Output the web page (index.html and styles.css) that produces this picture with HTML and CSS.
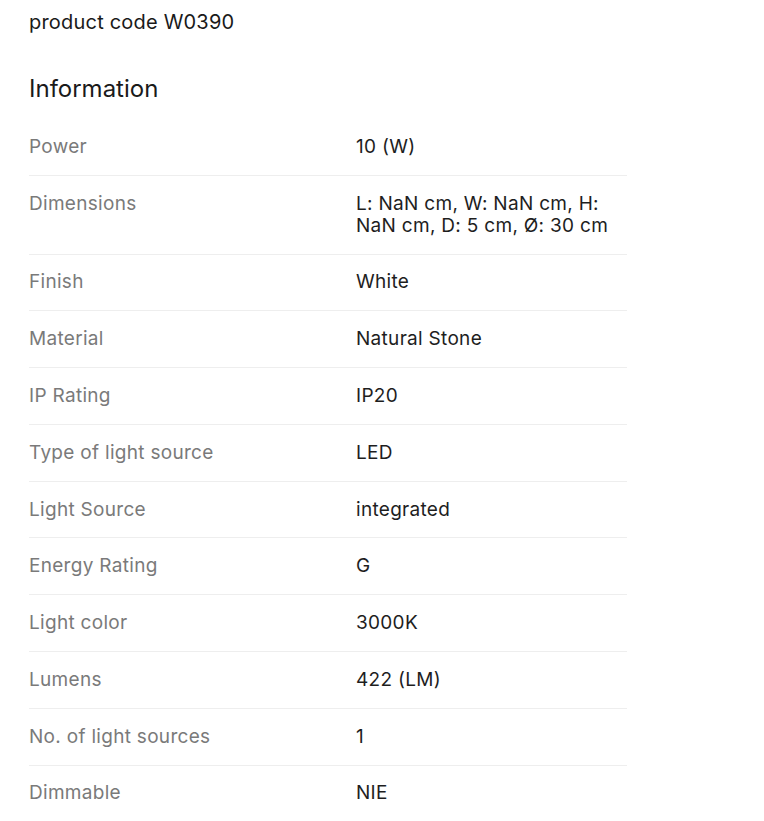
FILE: index.html
```html
<!DOCTYPE html>
<html lang="en">
<head>
<meta charset="utf-8">
<link rel="stylesheet" href="styles.css">
</head>
<body>
<div class="page">
  <p class="code">product code W0390</p>
  <h2 class="title">Information</h2>
  <div class="specs">
    <div class="row"><div class="label">Power</div><div class="value">10 (W)</div></div>
    <div class="row"><div class="label">Dimensions</div><div class="value">L: NaN cm, W: NaN cm, H: NaN cm, D: 5 cm, Ø: 30 cm</div></div>
    <div class="row"><div class="label">Finish</div><div class="value">White</div></div>
    <div class="row"><div class="label">Material</div><div class="value">Natural Stone</div></div>
    <div class="row"><div class="label">IP Rating</div><div class="value">IP20</div></div>
    <div class="row"><div class="label">Type of light source</div><div class="value">LED</div></div>
    <div class="row"><div class="label">Light Source</div><div class="value">integrated</div></div>
    <div class="row"><div class="label">Energy Rating</div><div class="value">G</div></div>
    <div class="row"><div class="label">Light color</div><div class="value">3000K</div></div>
    <div class="row"><div class="label">Lumens</div><div class="value">422 (LM)</div></div>
    <div class="row"><div class="label">No. of light sources</div><div class="value">1</div></div>
    <div class="row last"><div class="label">Dimmable</div><div class="value">NIE</div></div>
  </div>
</div>
</body>
</html>
```

FILE: styles.css
```css
* { box-sizing: border-box; }
html, body { margin: 0; padding: 0; background: #fff; }
body { font-family: Inter, "Noto Sans", sans-serif; color: #1a1a1a; }
.page { padding: 0 29px; width: 656px; }
.code { margin: 0; padding-top: 10px; font-size: 20px; line-height: 24px; letter-spacing: 0.2px; }
.title { margin: 0; padding-top: 40px; font-size: 24px; line-height: 30px; font-weight: 400; }
.specs { margin-top: 15px; }
.row { display: grid; grid-template-columns: 327px 1fr; border-bottom: 1px solid #eeeeee; padding: 16.9px 0; font-size: 19px; line-height: 22px; letter-spacing: 0.3px; }
.row.last { border-bottom: none; }
.label { color: #7a7a7a; }
.value { color: #1e1e1e; padding-right: 4px; }
```
